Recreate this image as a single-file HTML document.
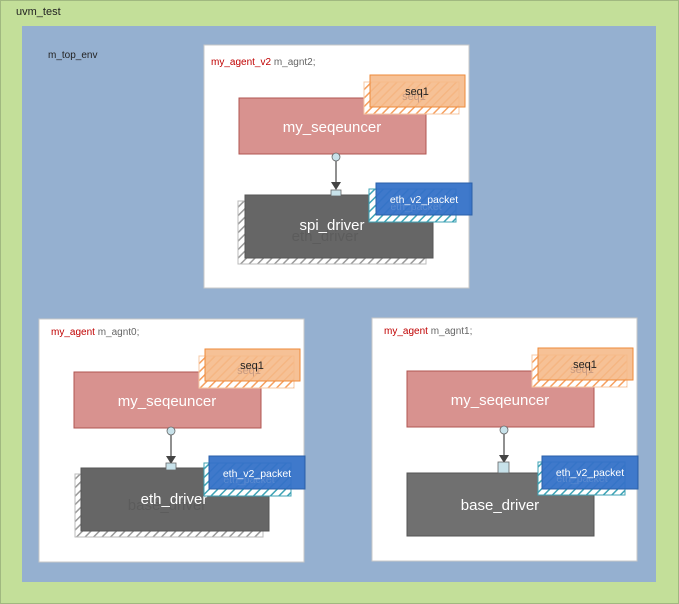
<!DOCTYPE html>
<html><head><meta charset="utf-8"><style>
html,body{margin:0;padding:0;background:#c3df99}
svg{display:block;font-family:"Liberation Sans",sans-serif}
</style></head><body>
<svg width="679" height="604" viewBox="0 0 679 604" xmlns="http://www.w3.org/2000/svg">
<defs>
<pattern id="hg" width="6" height="6" patternUnits="userSpaceOnUse" patternTransform="rotate(45)"><rect width="6" height="6" fill="#fff"/><rect width="1.5" height="6" fill="#9a9a9a"/></pattern>
<pattern id="ho" width="6" height="6" patternUnits="userSpaceOnUse" patternTransform="rotate(45)"><rect width="6" height="6" fill="#fff"/><rect width="1.5" height="6" fill="#f5a060"/></pattern>
<pattern id="ht" width="6" height="6" patternUnits="userSpaceOnUse" patternTransform="rotate(45)"><rect width="6" height="6" fill="#fff"/><rect width="1.5" height="6" fill="#3fa3b5"/></pattern>
<g id="agentbody">
<rect x="0" y="0" width="265" height="243" fill="#fff" stroke="#c8c8c8"/>
<rect x="35" y="53" width="187" height="56" fill="#d8928f" stroke="#b05552"/>
<text x="128" y="87" text-anchor="middle" font-size="15" fill="#fff">my_seqeuncer</text>
<rect x="160" y="37" width="95" height="32" fill="url(#ho)" stroke="#f7c8a4"/>
<rect x="166" y="30" width="95" height="32" fill="#f5b888" fill-opacity="0.88" stroke="#ee8a3a"/>
<text x="210" y="55" text-anchor="middle" font-size="11" fill="#c89a80">seq1</text>
<text x="213" y="50" text-anchor="middle" font-size="11" fill="#222">seq1</text>
<line x1="132" y1="116" x2="132" y2="138" stroke="#555" stroke-width="1.3"/>
<polygon points="127,137 137,137 132,145" fill="#444"/>
<circle cx="132" cy="112" r="4" fill="#c8e2ea" stroke="#666" stroke-width="0.8"/>
</g>
</defs>
<rect x="0.5" y="0.5" width="678" height="603" fill="#c3df99" stroke="#a0b880"/>
<text x="16" y="15" font-size="11" fill="#222">uvm_test</text>
<rect x="22" y="26" width="634" height="556" fill="#95b0d0"/>
<text x="48" y="58" font-size="10" fill="#222">m_top_env</text>

<g transform="translate(204,45)">
<use href="#agentbody"/>
<text x="7" y="20" font-size="10" fill="#c00000">my_agent_v2 <tspan fill="#666">m_agnt2;</tspan></text>
<rect x="34" y="156" width="188" height="63" fill="url(#hg)" stroke="#bbb"/>
<rect x="41" y="150" width="188" height="63" fill="#666" stroke="#555"/>
<text x="121" y="196" text-anchor="middle" font-size="15" fill="#5c5c5c">eth_driver</text>
<text x="128" y="185" text-anchor="middle" font-size="15" fill="#fff">spi_driver</text>
<rect x="127" y="145" width="10" height="6" fill="#c8e2ea" stroke="#666" stroke-width="0.8"/>
<rect x="165" y="144" width="87" height="33" fill="url(#ht)" stroke="#3fa3b5"/>
<rect x="172" y="138" width="96" height="32" fill="#3572c8" fill-opacity="0.95" stroke="#2a5fa8"/>
<text x="212" y="165" text-anchor="middle" font-size="10.5" fill="#5a8ad0">eth_packet</text>
<text x="220" y="158" text-anchor="middle" font-size="10.5" fill="#fff">eth_v2_packet</text>
</g>

<g transform="translate(39,319)">
<use href="#agentbody"/>
<text x="12" y="16" font-size="10" fill="#c00000">my_agent <tspan fill="#666">m_agnt0;</tspan></text>
<rect x="36" y="155" width="188" height="63" fill="url(#hg)" stroke="#bbb"/>
<rect x="42" y="149" width="188" height="63" fill="#666" stroke="#555"/>
<text x="128" y="191" text-anchor="middle" font-size="15" fill="#5c5c5c">base_driver</text>
<text x="135" y="185" text-anchor="middle" font-size="15" fill="#fff">eth_driver</text>
<rect x="127" y="144" width="10" height="7" fill="#c8e2ea" stroke="#666" stroke-width="0.8"/>
<rect x="165" y="144" width="87" height="33" fill="url(#ht)" stroke="#3fa3b5"/>
<rect x="170" y="137" width="96" height="33" fill="#3572c8" fill-opacity="0.95" stroke="#2a5fa8"/>
<text x="210" y="164" text-anchor="middle" font-size="10.5" fill="#5a8ad0">eth_packet</text>
<text x="218" y="158" text-anchor="middle" font-size="10.5" fill="#fff">eth_v2_packet</text>
</g>

<g transform="translate(372,318)">
<use href="#agentbody"/>
<text x="12" y="16" font-size="10" fill="#c00000">my_agent <tspan fill="#666">m_agnt1;</tspan></text>
<rect x="35" y="155" width="187" height="63" fill="#707070" stroke="#555"/>
<text x="128" y="192" text-anchor="middle" font-size="15" fill="#fff">base_driver</text>
<rect x="126" y="144" width="11" height="11" fill="#c8e2ea" stroke="#666" stroke-width="0.8"/>
<rect x="166" y="144" width="87" height="33" fill="url(#ht)" stroke="#3fa3b5"/>
<rect x="170" y="138" width="96" height="33" fill="#3572c8" fill-opacity="0.95" stroke="#2a5fa8"/>
<text x="210" y="164" text-anchor="middle" font-size="10.5" fill="#5a8ad0">eth_packet</text>
<text x="218" y="158" text-anchor="middle" font-size="10.5" fill="#fff">eth_v2_packet</text>
</g>
</svg>
</body></html>
